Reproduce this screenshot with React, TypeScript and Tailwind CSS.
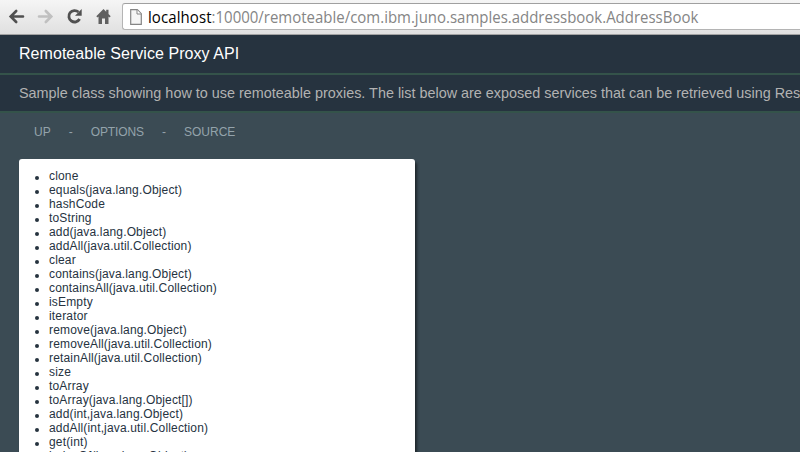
const methods = [
  'clone',
  'equals(java.lang.Object)',
  'hashCode',
  'toString',
  'add(java.lang.Object)',
  'addAll(java.util.Collection)',
  'clear',
  'contains(java.lang.Object)',
  'containsAll(java.util.Collection)',
  'isEmpty',
  'iterator',
  'remove(java.lang.Object)',
  'removeAll(java.util.Collection)',
  'retainAll(java.util.Collection)',
  'size',
  'toArray',
  'toArray(java.lang.Object[])',
  'add(int,java.lang.Object)',
  'addAll(int,java.util.Collection)',
  'get(int)',
  'indexOf(java.lang.Object)',
];

function Toolbar() {
  return (
    <div className="flex h-[35px] border-b border-[#a2a2a2] bg-linear-to-b from-[#f5f5f5] to-[#e0e0e0]">
      <svg className="h-[34px] w-[122px] shrink-0" viewBox="0 0 122 34" fill="none">
        <path d="M23 16.5H11M16.2 11L10.7 16.5L16.2 22" stroke="#505050" strokeWidth="2.6" strokeLinecap="round" />
        <path d="M39 16.5H51M45.8 11L51.3 16.5L45.8 22" stroke="#c0c0c0" strokeWidth="2.6" strokeLinecap="round" />
        <path d="M78.5 12.1A5.7 5.7 0 1 0 79.6 19" stroke="#505050" strokeWidth="2.8" />
        <path d="M81.7 9V15.7H75Z" fill="#505050" />
        <path d="M103.5 9L96.3 16.2L97.5 17.4L98.5 16.5V24H102V18.5H105V24H108.5V16.5L109.5 17.4L110.7 16.2L108.5 14V9.8H106.2V11.7Z" fill="#606060" />
      </svg>
      <div className="mt-[3px] flex h-[27px] flex-1 items-center rounded-l-[3px] border border-r-0 border-[#b4b4b4] border-t-[#a0a0a0] bg-white">
        <svg className="ml-[7px] h-4 w-3 shrink-0" viewBox="0 0 12 16" fill="none">
          <path d="M.7.7H7.3L11.3 4.7V15.3H.7Z" fill="#f5f5f5" stroke="#858585" strokeWidth="1.2" />
          <path d="M7 1V5H11" fill="#fff" stroke="#858585" />
        </svg>
        <div className="ml-[6px] origin-left scale-x-[0.936] whitespace-nowrap font-['Open_Sans','Noto_Sans',sans-serif] text-[16px] leading-6 text-[#858585]">
          <span className="tracking-[0.1px] text-black">localhost</span>:10000/remoteable/com.ibm.juno.samples.addressbook.AddressBook
        </div>
      </div>
    </div>
  );
}

export default function App() {
  return (
    <div className="flex h-[452px] w-[800px] flex-col overflow-hidden bg-[#3b4b54] font-['Liberation_Sans',Arial,sans-serif]">
      <Toolbar />
      <h1 className="h-10 shrink-0 border-b-2 border-[#34534a] bg-[#26333f] pl-[19px] text-[16px] leading-[37px] tracking-[0.05px] whitespace-nowrap text-white">
        Remoteable Service Proxy API
      </h1>
      <p className="h-[38px] shrink-0 border-b-2 border-[#34534a] bg-[#26333f] pl-[19px] text-[14.4px] leading-[36px] whitespace-nowrap text-[#b2b2b2]">
        Sample class showing how to use remoteable proxies. The list below are exposed services that can be retrieved using RestClient
      </p>
      <nav className="flex h-[46px] shrink-0 pl-[34px] text-[12px] leading-[39px] text-[#94a3ab]">
        <span>UP</span>
        <span className="mx-[18px]">-</span>
        <span className="tracking-[-0.1px]">OPTIONS</span>
        <span className="mx-[18px]">-</span>
        <span>SOURCE</span>
      </nav>
      <main className="ml-[19px] h-[320px] w-[396px] shrink-0 rounded-[3px] bg-white pt-[10px] shadow-[2px_3px_3px_0px_rgba(0,0,0,0.5)]">
        <ul className="text-[12px] leading-[14px] tracking-[0.16px] text-[#26333f]">
          {methods.map((method) => (
            <li key={method} className="flex items-center pl-4">
              <span className="mt-[3px] mr-[10px] size-1 rounded-full bg-[#26333f]" />
              {method}
            </li>
          ))}
        </ul>
      </main>
    </div>
  );
}
